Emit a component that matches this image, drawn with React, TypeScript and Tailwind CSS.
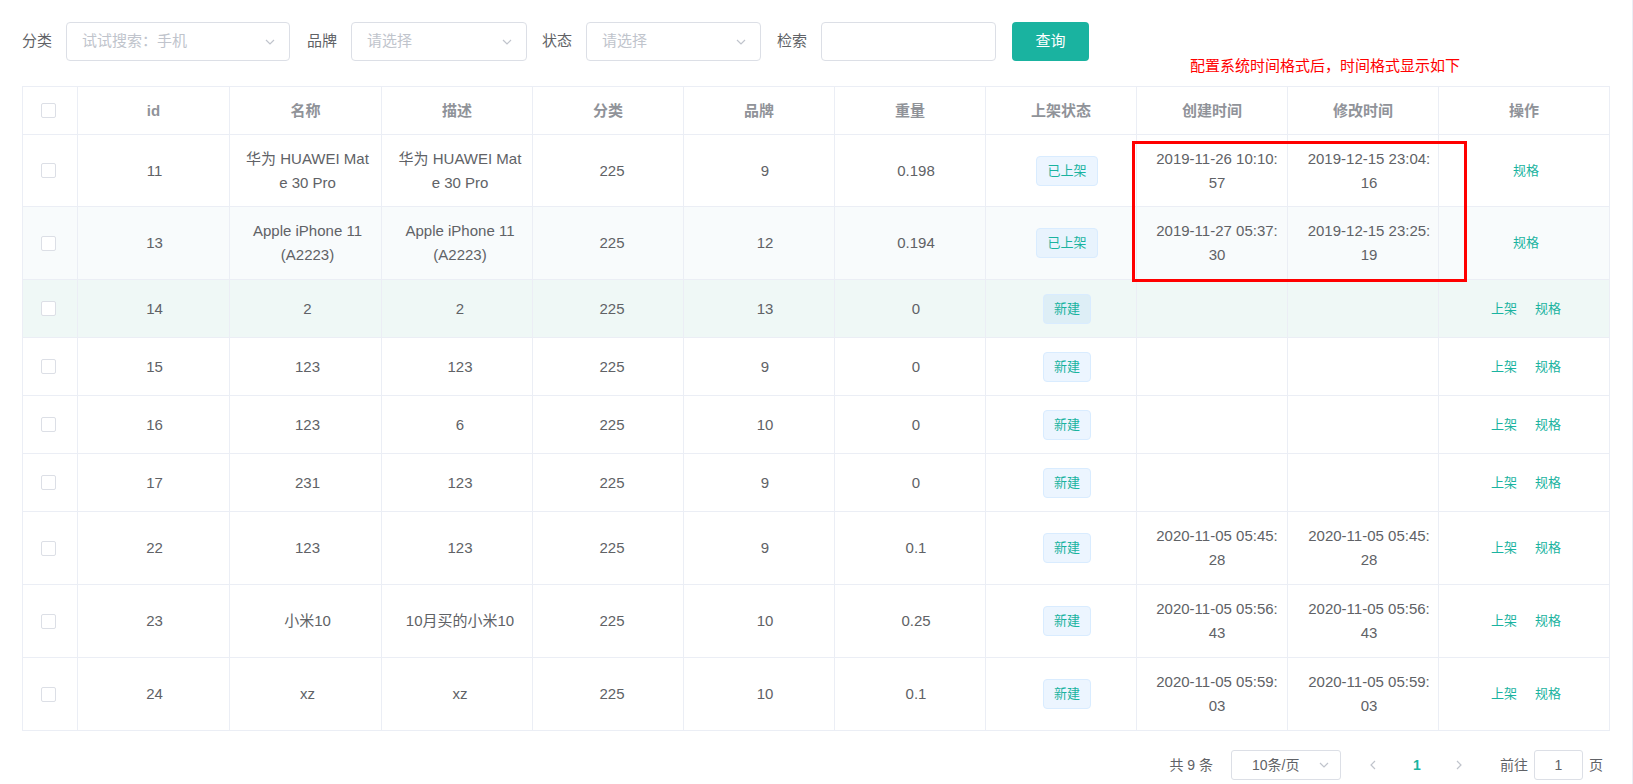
import React from "react";

interface Row {
  id: string;
  name: string;
  desc: string;
  brand: string;
  weight: string;
  status: string;
  created: string;
  updated: string;
  ops: string[];
  h: string;
  bg: string;
  tagBg: string;
}

const rows: Row[] = [
  { id: "11", name: "华为 HUAWEI Mat\ne 30 Pro", desc: "华为 HUAWEI Mat\ne 30 Pro", brand: "9", weight: "0.198", status: "已上架", created: "2019-11-26 10:10:\n57", updated: "2019-12-15 23:04:\n16", ops: ["规格"], h: "h-[72px]", bg: "bg-white", tagBg: "bg-[#ecf5ff]" },
  { id: "13", name: "Apple iPhone 11\n(A2223)", desc: "Apple iPhone 11\n(A2223)", brand: "12", weight: "0.194", status: "已上架", created: "2019-11-27 05:37:\n30", updated: "2019-12-15 23:25:\n19", ops: ["规格"], h: "h-[73px]", bg: "bg-[#f8fbfc]", tagBg: "bg-[#e8f3fd]" },
  { id: "14", name: "2", desc: "2", brand: "13", weight: "0", status: "新建", created: "", updated: "", ops: ["上架", "规格"], h: "h-[58px]", bg: "bg-[#eff8f6]", tagBg: "bg-[#ddeef6]" },
  { id: "15", name: "123", desc: "123", brand: "9", weight: "0", status: "新建", created: "", updated: "", ops: ["上架", "规格"], h: "h-[58px]", bg: "bg-white", tagBg: "bg-[#ecf5ff]" },
  { id: "16", name: "123", desc: "6", brand: "10", weight: "0", status: "新建", created: "", updated: "", ops: ["上架", "规格"], h: "h-[58px]", bg: "bg-white", tagBg: "bg-[#ecf5ff]" },
  { id: "17", name: "231", desc: "123", brand: "9", weight: "0", status: "新建", created: "", updated: "", ops: ["上架", "规格"], h: "h-[58px]", bg: "bg-white", tagBg: "bg-[#ecf5ff]" },
  { id: "22", name: "123", desc: "123", brand: "9", weight: "0.1", status: "新建", created: "2020-11-05 05:45:\n28", updated: "2020-11-05 05:45:\n28", ops: ["上架", "规格"], h: "h-[73px]", bg: "bg-white", tagBg: "bg-[#ecf5ff]" },
  { id: "23", name: "小米10", desc: "10月买的小米10", brand: "10", weight: "0.25", status: "新建", created: "2020-11-05 05:56:\n43", updated: "2020-11-05 05:56:\n43", ops: ["上架", "规格"], h: "h-[73px]", bg: "bg-white", tagBg: "bg-[#ecf5ff]" },
  { id: "24", name: "xz", desc: "xz", brand: "10", weight: "0.1", status: "新建", created: "2020-11-05 05:59:\n03", updated: "2020-11-05 05:59:\n03", ops: ["上架", "规格"], h: "h-[73px]", bg: "bg-white", tagBg: "bg-[#ecf5ff]" },
];

const headers = ["id", "名称", "描述", "分类", "品牌", "重量", "上架状态", "创建时间", "修改时间", "操作"];

// body cells sit a few px right of the column centre in the original
const pad = [
  "pl-[11px] pr-[9px]",
  "pl-[12px] pr-[8px]",
  "pl-[13px] pr-[7px]",
  "pl-[14px] pr-[6px]",
  "pl-[16px] pr-[4px]",
  "pl-[16px] pr-[4px]",
  "pl-[16px] pr-[4px]",
  "pl-[15px] pr-[5px]",
  "pl-[16px] pr-[4px]",
  "pl-[12px] pr-[8px]",
];

const cell =
  "flex items-center justify-center border-r border-b border-[#ebeef5] text-center leading-[24px] whitespace-pre-line";

function Chevron({ dir, className }: { dir: "down" | "left" | "right"; className?: string }) {
  const pts = dir === "down" ? "2,4 6,8 10,4" : dir === "left" ? "8,2 4,6 8,10" : "4,2 8,6 4,10";
  return (
    <svg width="12" height="12" viewBox="0 0 12 12" className={className}>
      <polyline points={pts} fill="none" stroke="currentColor" strokeWidth="1.2" />
    </svg>
  );
}

function Select({ w, placeholder }: { w: string; placeholder: string }) {
  return (
    <div className={`${w} h-[39px] flex items-center justify-between rounded-[4px] border border-[#dcdfe6] bg-white pl-[15px] pr-[13px]`}>
      <span className="text-[#c0c4cc]">{placeholder}</span>
      <Chevron dir="down" className="text-[#c0c4cc]" />
    </div>
  );
}

function Checkbox() {
  return <span className="block mr-[4px] w-[15px] h-[15px] rounded-[2px] border border-[#dcdfe6] bg-white" />;
}

export default function App() {
  return (
    <div
      className="relative w-[1633px] h-[784px] overflow-hidden bg-white border-r border-[#ebeef5] text-[15px] text-[#606266]"
      style={{ fontFamily: '"Liberation Sans", "Noto Sans CJK SC", sans-serif' }}
    >
      {/* filter bar */}
      <div className="flex items-center pt-[22px] pl-[22px]">
        <span className="mr-[14px]">分类</span>
        <Select w="w-[224px]" placeholder="试试搜索：手机" />
        <span className="ml-[17px] mr-[14px]">品牌</span>
        <Select w="w-[176px]" placeholder="请选择" />
        <span className="ml-[15px] mr-[14px]">状态</span>
        <Select w="w-[175px]" placeholder="请选择" />
        <span className="ml-[16px] mr-[14px]">检索</span>
        <div className="w-[175px] h-[39px] rounded-[4px] border border-[#dcdfe6] bg-white" />
        <button className="ml-[16px] w-[77px] h-[39px] rounded-[4px] bg-[#1ab3a0] text-white">查询</button>
      </div>

      {/* table */}
      <div className="ml-[22px] mt-[25px] w-[1588px] border-l border-t border-[#ebeef5]">
        <div className="grid grid-cols-[55px_152px_152px_repeat(7,151px)_1fr] h-[48px] font-bold text-[#909399]">
          <div className={cell}>
            <Checkbox />
          </div>
          {headers.map((h) => (
            <div key={h} className={`${cell} px-[10px]`}>
              {h}
            </div>
          ))}
        </div>
        {rows.map((r) => (
          <div key={r.id} className={`grid grid-cols-[55px_152px_152px_repeat(7,151px)_1fr] ${r.h} ${r.bg}`}>
            <div className={cell}>
              <Checkbox />
            </div>
            <div className={`${cell} ${pad[0]}`}>{r.id}</div>
            <div className={`${cell} ${pad[1]}`}>{r.name}</div>
            <div className={`${cell} ${pad[2]}`}>{r.desc}</div>
            <div className={`${cell} ${pad[3]}`}>225</div>
            <div className={`${cell} ${pad[4]}`}>{r.brand}</div>
            <div className={`${cell} ${pad[5]}`}>{r.weight}</div>
            <div className={`${cell} ${pad[6]}`}>
              <span className={`inline-flex items-center h-[30px] px-[10px] rounded-[4px] border border-[#d9ecff] ${r.tagBg} text-[13px] text-[#1ab3a0]`}>
                {r.status}
              </span>
            </div>
            <div className={`${cell} ${pad[7]}`}>{r.created}</div>
            <div className={`${cell} ${pad[8]}`}>{r.updated}</div>
            <div className={`${cell} ${pad[9]} gap-[18px] text-[13px] text-[#1ab3a0]`}>
              {r.ops.map((o) => (
                <span key={o}>{o}</span>
              ))}
            </div>
          </div>
        ))}
      </div>

      {/* pagination */}
      <div className="flex items-center justify-end pr-[29px] mt-[19px] text-[14px]">
        <span>共 9 条</span>
        <div className="ml-[18px] w-[110px] h-[30px] flex items-center justify-between rounded-[3px] border border-[#dcdfe6] pl-[20px] pr-[10px]">
          <span>10条/页</span>
          <Chevron dir="down" className="text-[#c0c4cc]" />
        </div>
        <span className="ml-[17px] w-[30px] flex justify-center text-[#c0c4cc]">
          <Chevron dir="left" />
        </span>
        <span className="ml-[11px] w-[36px] text-center font-bold text-[#1ab3a0]">1</span>
        <span className="ml-[9px] w-[30px] flex justify-center text-[#c0c4cc]">
          <Chevron dir="right" />
        </span>
        <span className="ml-[26px]">前往</span>
        <div className="ml-[6px] w-[49px] h-[30px] flex items-center justify-center rounded-[3px] border border-[#dcdfe6]">1</div>
        <span className="ml-[6px]">页</span>
      </div>

      {/* annotation overlay */}
      <div className="absolute left-[1190px] top-[56px] leading-[20px] text-[15px] text-[#ff0000]">
        配置系统时间格式后，时间格式显示如下
      </div>
      <div className="absolute left-[1132px] top-[141px] w-[335px] h-[141px] border-[3px] border-[#ff0000]" />
    </div>
  );
}
